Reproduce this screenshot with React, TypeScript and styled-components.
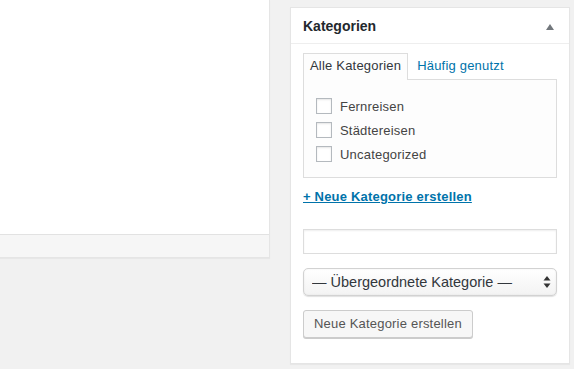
import React from "react";
import styled, { createGlobalStyle } from "styled-components";

const GlobalStyle = createGlobalStyle`
  html, body { margin: 0; padding: 0; }
  body {
    background: #f1f1f1;
    font-family: "Liberation Sans", Arial, sans-serif;
    font-size: 13px;
    color: #444;
  }
  * { box-sizing: border-box; }
`;

const Page = styled.div`
  width: 574px;
  height: 369px;
  overflow: hidden;
  display: flex;
  align-items: flex-start;
  gap: 20px;
`;

const Editor = styled.div`
  width: 271px;
  margin-left: -1px;
  display: flex;
  flex-direction: column;
  border: 1px solid #e5e5e5;
  border-top: none;
  background: #fff;
  box-shadow: 0 1px 1px rgba(0, 0, 0, 0.04);
`;

const EditorBody = styled.div`
  height: 234px;
  background: #fff;
`;

const EditorFooter = styled.div`
  height: 23px;
  background: #f6f6f6;
  border-top: 1px solid #e2e2e2;
`;

const Postbox = styled.div`
  margin-top: 7px;
  width: 280px;
  background: #fff;
  border: 1px solid #e5e5e5;
  box-shadow: 0 1px 1px rgba(0, 0, 0, 0.04);
`;

const Header = styled.div`
  height: 36px;
  border-bottom: 1px solid #eee;
  display: flex;
  align-items: center;
  justify-content: space-between;
  padding: 0 15px 0 12px;
`;

const Title = styled.h2`
  margin: 0;
  font-size: 14px;
  font-weight: 700;
  color: #23282d;
  line-height: 20px;
`;

const Toggle = styled.span`
  width: 0;
  height: 0;
  border-left: 4px solid transparent;
  border-right: 4px solid transparent;
  border-bottom: 6px solid #72777c;
  margin-top: 2px;
`;

const Inside = styled.div`
  padding: 9px 12px 25px;
  display: flex;
  flex-direction: column;
  align-items: flex-start;
`;

const Tabs = styled.div`
  display: flex;
  gap: 2px;
  position: relative;
  z-index: 1;
  margin-bottom: -1px;
`;

const Tab = styled.div<{ $active?: boolean }>`
  padding: 3px 6px 5px;
  line-height: 18px;
  font-size: 13px;
  letter-spacing: 0.2px;
  border: 1px solid ${(p) => (p.$active ? "#ddd" : "transparent")};
  border-bottom: none;
  background: ${(p) => (p.$active ? "#fdfdfd" : "transparent")};
  color: ${(p) => (p.$active ? "#32373c" : "#0073aa")};
`;

const TabPanel = styled.div`
  align-self: stretch;
  border: 1px solid #ddd;
  background: #fdfdfd;
  padding: 14px 12px 11px;
  display: flex;
  flex-direction: column;
`;

const Row = styled.label`
  height: 24px;
  display: flex;
  align-items: center;
  gap: 8px;
  color: #444;
  font-size: 13px;
  letter-spacing: 0.2px;
`;

const Check = styled.input.attrs({ type: "checkbox" })`
  appearance: none;
  margin: 0;
  width: 16px;
  height: 16px;
  border: 1px solid #b4b9be;
  background: #fff;
  box-shadow: inset 0 1px 2px rgba(0, 0, 0, 0.1);
`;

const AddLink = styled.a`
  margin-top: 10px;
  line-height: 18px;
  font-weight: 700;
  font-size: 13px;
  letter-spacing: 0.2px;
  color: #0073aa;
  text-decoration: underline;
`;

const TextInput = styled.input.attrs({ type: "text" })`
  margin-top: 23px;
  align-self: stretch;
  height: 25px;
  border: 1px solid #ddd;
  background: #fff;
  box-shadow: inset 0 1px 2px rgba(0, 0, 0, 0.07);
  outline: none;
`;

const SelectWrap = styled.div`
  margin-top: 14px;
  align-self: stretch;
  position: relative;
`;

const Select = styled.select`
  appearance: none;
  width: 100%;
  height: 28px;
  margin: 0;
  padding: 0 24px 0 8px;
  border: 1px solid #d2d2d2;
  border-radius: 5px;
  background: linear-gradient(#ffffff, #f3f3f3);
  box-shadow: 0 1px 1px rgba(0, 0, 0, 0.12), inset 0 0 2px rgba(0, 0, 0, 0.08);
  font-family: "Liberation Sans", Arial, sans-serif;
  font-size: 14.5px;
  color: #32373c;
  outline: none;
`;

const Arrows = styled.svg`
  position: absolute;
  right: 6px;
  top: 8px;
  width: 8px;
  height: 12px;
  pointer-events: none;
`;

const Button = styled.button`
  margin-top: 14px;
  height: 28px;
  padding: 0 10px;
  border: 1px solid #ccc;
  border-radius: 3px;
  background: #f7f7f7;
  box-shadow: 0 1px 0 #ccc;
  color: #555;
  font-family: "Liberation Sans", Arial, sans-serif;
  font-size: 13px;
  letter-spacing: 0.2px;
  line-height: 26px;
`;

const categories = ["Fernreisen", "Städtereisen", "Uncategorized"];

export default function App() {
  return (
    <>
      <GlobalStyle />
      <Page>
        <Editor>
          <EditorBody />
          <EditorFooter />
        </Editor>
        <Postbox>
          <Header>
            <Title>Kategorien</Title>
            <Toggle />
          </Header>
          <Inside>
            <Tabs>
              <Tab $active>Alle Kategorien</Tab>
              <Tab>Häufig genutzt</Tab>
            </Tabs>
            <TabPanel>
              {categories.map((c) => (
                <Row key={c}>
                  <Check />
                  {c}
                </Row>
              ))}
            </TabPanel>
            <AddLink href="#">+ Neue Kategorie erstellen</AddLink>
            <TextInput />
            <SelectWrap>
              <Select defaultValue="-1">
                <option value="-1">— Übergeordnete Kategorie —</option>
              </Select>
              <Arrows viewBox="0 0 8 12">
                <path d="M4 0 L7.5 4.5 L0.5 4.5 Z" fill="#333" />
                <path d="M4 12 L7.5 7.5 L0.5 7.5 Z" fill="#333" />
              </Arrows>
            </SelectWrap>
            <Button>Neue Kategorie erstellen</Button>
          </Inside>
        </Postbox>
      </Page>
    </>
  );
}
